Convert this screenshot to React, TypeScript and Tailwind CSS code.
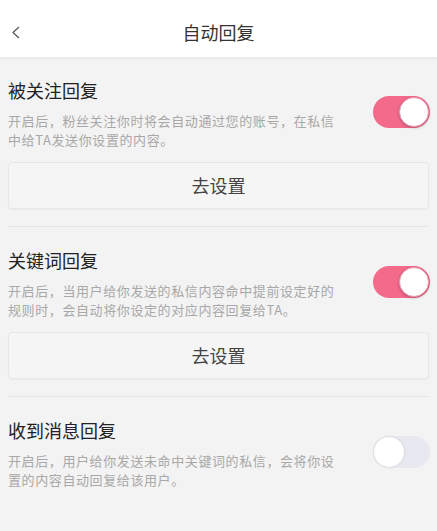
import React from "react";

const font = { fontFamily: '"Noto Sans CJK SC", "Noto Sans", sans-serif' };

function Toggle({ on }: { on: boolean }) {
  return on ? (
    <div className="relative w-[57px] h-[32px] rounded-full bg-[#f36a8b] shrink-0">
      <div className="absolute right-[1px] top-[1px] w-[30px] h-[30px] rounded-full bg-white border border-[#e896ab] shadow-[0_1px_3px_rgba(0,0,0,0.25)]" />
    </div>
  ) : (
    <div className="relative w-[57px] h-[32px] rounded-full bg-[#e8e9f0] shrink-0">
      <div className="absolute left-[1px] top-[1px] w-[30px] h-[30px] rounded-full bg-white shadow-[0_0_3px_rgba(0,0,0,0.12)]" />
    </div>
  );
}

function Section({
  title,
  desc,
  on,
  button,
  divider,
}: {
  title: string;
  desc: string;
  on: boolean;
  button: boolean;
  divider: boolean;
}) {
  return (
    <div className="px-2 pt-[21px]">
      <div className="flex justify-between">
        <div>
          <div className="text-[18px] leading-[24px] text-[#222]">{title}</div>
          <div className="mt-[9px] w-[335px] text-[13px] leading-[19px] tracking-[0.6px] text-[#a8a8a8]">
            {desc}
          </div>
        </div>
        <div className="mt-[18px] mr-[-1px]">
          <Toggle on={on} />
        </div>
      </div>
      {button && (
        <div className="mt-[13px] h-[47px] rounded-[4px] border border-[#e7e7e7] bg-[#f5f5f5] shadow-[0_1px_2px_rgba(0,0,0,0.04)] flex items-center justify-center text-[18px] text-[#444]">
          去设置
        </div>
      )}
      {divider && <div className="mt-[17px] h-px bg-[#e6e6e6]" />}
    </div>
  );
}

export default function App() {
  return (
    <div style={font} className="w-[437px] h-[531px] bg-[#f3f3f3] overflow-hidden">
      <div className="relative h-[57px] bg-white flex items-center justify-center shadow-[0_1px_3px_rgba(0,0,0,0.08)]">
        <svg
          className="absolute left-[11px] top-[26px]"
          width="10"
          height="13"
          viewBox="0 0 10 13"
          fill="none"
        >
          <path d="M8 1 L2 6.5 L8 12" stroke="#555" strokeWidth="1.2" />
        </svg>
        <div className="text-[18px] text-[#333] mt-[8px]">自动回复</div>
      </div>
      <Section
        title="被关注回复"
        desc="开启后，粉丝关注你时将会自动通过您的账号，在私信中给TA发送你设置的内容。"
        on
        button
        divider
      />
      <Section
        title="关键词回复"
        desc="开启后，当用户给你发送的私信内容命中提前设定好的规则时，会自动将你设定的对应内容回复给TA。"
        on
        button
        divider
      />
      <Section
        title="收到消息回复"
        desc="开启后，用户给你发送未命中关键词的私信，会将你设置的内容自动回复给该用户。"
        on={false}
        button={false}
        divider={false}
      />
    </div>
  );
}
